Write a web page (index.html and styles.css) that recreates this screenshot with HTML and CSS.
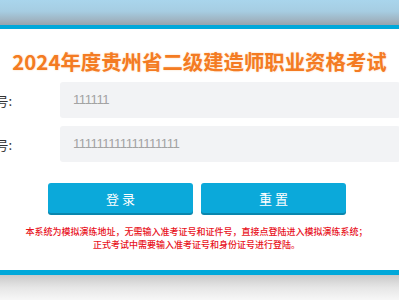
FILE: index.html
```html
<!DOCTYPE html>
<html lang="zh-CN">
<head>
<meta charset="utf-8">
<title>2024年度贵州省二级建造师职业资格考试</title>
<link rel="stylesheet" href="styles.css">
</head>
<body>
<div class="topbar"></div>
<div class="card">
  <h1 class="title">2024年度贵州省二级建造师职业资格考试</h1>
  <div class="form">
    <div class="row">
      <label class="label">准考证号:</label>
      <div class="input">111111</div>
    </div>
    <div class="row">
      <label class="label">身份证号:</label>
      <div class="input">111111111111111111</div>
    </div>
  </div>
  <div class="buttons">
    <button class="btn">登 录</button>
    <button class="btn">重 置</button>
  </div>
  <div class="notice">
    <p>本系统为模拟演练地址，无需输入准考证号和证件号，直接点登陆进入模拟演练系统；</p>
    <p>正式考试中需要输入准考证号和身份证号进行登陆。</p>
  </div>
</div>
<div class="shadow"></div>
</body>
</html>
```
FILE: styles.css
```css
html, body {
  margin: 0;
  padding: 0;
  background: #ffffff;
  overflow: hidden;
}
body {
  width: 399px;
  height: 300px;
  font-family: "Noto Sans CJK SC", "Noto Sans", sans-serif;
}
.topbar {
  height: 25px;
  background: linear-gradient(to bottom, #a9d5ec 0%, #a6cde2 45%, #9fb4c2 80%, #97a3ad 100%);
}
.card {
  border-top: 4px solid #00a8da;
  border-bottom: 5px solid #00a8da;
  background: #ffffff;
  height: 250px;
  box-sizing: border-box;
  padding-top: 17px;
  overflow: hidden;
}
.title {
  margin: 0;
  text-align: center;
  white-space: nowrap;
  font-size: 20.4px;
  line-height: 30px;
  font-weight: 700;
  letter-spacing: 0;
  color: #f47b22;
  text-shadow: 0 0 2px #fbd3ad;
}
.form {
  margin-top: 6px;
  margin-left: -60px;
  display: flex;
  flex-direction: column;
  gap: 8px;
}
.row {
  display: flex;
  align-items: center;
}
.label {
  width: 72px;
  text-align: right;
  font-size: 13px;
  color: #333333;
  flex: none;
  white-space: nowrap;
}
.input {
  margin-left: 48px;
  width: 340px;
  height: 36px;
  flex: none;
  box-sizing: border-box;
  background: #f2f3f5;
  border-radius: 3px;
  padding-left: 13px;
  font-size: 13.2px;
  letter-spacing: -0.5px;
  line-height: 36px;
  color: #a3a3a3;
  font-family: "Liberation Sans", "Noto Sans CJK SC", sans-serif;
}
.buttons {
  display: flex;
  gap: 8px;
  padding-left: 48px;
  margin-top: 21px;
}
.btn {
  width: 145px;
  height: 30px;
  border: none;
  border-radius: 3px;
  background: #0ba9da;
  box-shadow: 0 2px 0 #0a86ad;
  color: #ffffff;
  font-family: "Noto Sans CJK SC", sans-serif;
  font-size: 13px;
  padding: 0;
  margin: 0;
}
.notice {
  margin-top: 12px;
  text-align: center;
  color: #e8121c;
  font-size: 9px;
  font-weight: 500;
  line-height: 13px;
  padding-right: 6px;
  white-space: nowrap;
}
.notice p {
  margin: 0;
}
.shadow {
  height: 25px;
  background: linear-gradient(to bottom, #c9c9c9 0%, #e6e6e6 50%, #f7f7f7 100%);
}
```
